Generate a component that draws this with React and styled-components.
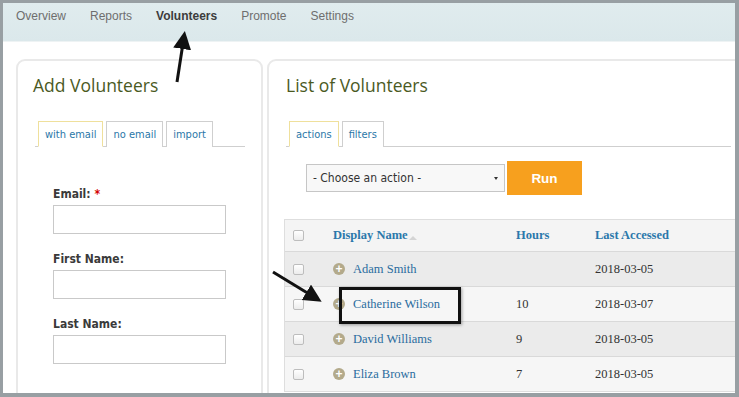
import styled, { createGlobalStyle } from "styled-components";

const Global = createGlobalStyle`
  html, body { margin: 0; padding: 0; background: #fff; }
`;

const Frame = styled.div`
  position: relative;
  width: 739px;
  height: 397px;
  box-sizing: border-box;
  border-style: solid;
  border-color: #989fa3;
  border-width: 3px 4px 4px 3px;
  overflow: hidden;
  background: #fff;
  font-family: "Liberation Sans", Arial, sans-serif;
`;

const Nav = styled.nav`
  height: 39px;
  box-sizing: border-box;
  padding: 6px 0 0 13px;
  display: flex;
  gap: 24px;
  background: linear-gradient(#e0ecee, #dbe8eb);
  border-bottom: 1px solid #eef3f4;
`;

const NavItem = styled.span`
  font-size: 12px;
  line-height: 14px;
  color: ${(p) => (p.$active ? "#3c3c3c" : "#6e6e6e")};
  font-weight: ${(p) => (p.$active ? "bold" : "normal")};
`;

const Content = styled.div`
  display: flex;
  gap: 4px;
  padding: 17px 0 0 13px;
`;

const Panel = styled.section`
  flex: none;
  width: ${(p) => p.$width}px;
  height: 360px;
  box-sizing: border-box;
  border: 2px solid #e9e9e9;
  border-radius: 9px;
  padding: ${(p) => p.$pad};
`;

const Title = styled.h2`
  margin: 0;
  font-family: "Open Sans", sans-serif;
  font-weight: 400;
  font-size: 17.5px;
  line-height: 24px;
  color: #4b5a1f;
`;

const TabBar = styled.div`
  display: flex;
  gap: 3px;
  margin: 24px ${(p) => p.$right}px 0 ${(p) => p.$left}px;
  padding-left: 3px;
  border-bottom: 1px solid #cfcfcf;
`;

const Tab = styled.span`
  box-sizing: border-box;
  height: 26px;
  padding: 0 6px;
  display: flex;
  align-items: center;
  font-family: "DejaVu Sans Condensed", "DejaVu Sans", sans-serif;
  font-size: 11px;
  color: #2a77a8;
  border: 1px solid ${(p) => (p.$active ? "#efe09c" : "#cfcfcf")};
  border-bottom: none;
  background: #fff;
  margin-bottom: -1px;
  ${(p) => p.$active && "border-bottom: 1px solid #fff;"}
`;

const Form = styled.div`
  padding: 40px 0 0 20px;
  display: flex;
  flex-direction: column;
`;

const Label = styled.label`
  font-family: "DejaVu Sans Condensed", "DejaVu Sans", sans-serif;
  font-weight: bold;
  font-size: 12px;
  line-height: 14px;
  color: #3a3a3a;
  margin-top: ${(p) => p.$top}px;
  margin-bottom: 4px;
`;

const Required = styled.span`
  color: #d40000;
`;

const Input = styled.input`
  box-sizing: border-box;
  width: 173px;
  height: 29px;
  border: 1px solid #c9c9c9;
  background: #fff;
`;

const ActionRow = styled.div`
  display: flex;
  align-items: center;
  gap: 2px;
  margin: 14px 0 0 20px;
`;

const Select = styled.div`
  box-sizing: border-box;
  width: 199px;
  height: 28px;
  border: 1px solid #c6c6c6;
  background: #f8f8f8;
  display: flex;
  align-items: center;
  justify-content: space-between;
  padding: 0 6px;
  font-family: "DejaVu Sans Condensed", "DejaVu Sans", sans-serif;
  font-size: 12px;
  color: #333;
`;

const Caret = styled.span`
  width: 0;
  height: 0;
  border-left: 2.5px solid transparent;
  border-right: 2.5px solid transparent;
  border-top: 3px solid #333;
`;

const RunButton = styled.button`
  width: 75px;
  height: 34px;
  border: none;
  background: #f7a01e;
  color: #fff;
  font-family: "Liberation Sans", Arial, sans-serif;
  font-weight: bold;
  font-size: 13.5px;
`;

const Table = styled.div`
  margin: 24px 0 0 -2px;
  border: 1px solid #dedede;
  font-family: "Liberation Serif", "Times New Roman", serif;
  font-size: 12.5px;
`;

const Row = styled.div`
  display: grid;
  grid-template-columns: 48px 183px 79px 1fr;
  align-items: center;
  height: ${(p) => (p.$head ? 31 : 34)}px;
  background: ${(p) => (p.$head ? "#f4f4f4" : p.$odd ? "#ebebeb" : "#f6f6f6")};
  border-top: ${(p) => (p.$head ? "none" : "1px solid #d9d9d9")};
  color: #333;
`;

const HeadCell = styled.span`
  font-weight: bold;
  color: #2b78ab;
  display: flex;
  align-items: center;
`;

const SortMark = styled.span`
  width: 0;
  height: 0;
  margin: 4px 0 0 1px;
  border-left: 4px solid transparent;
  border-right: 4px solid transparent;
  border-bottom: 4px solid #d4d4d4;
`;

const Check = styled.span`
  justify-self: start;
  margin-left: 8px;
  width: 9px;
  height: 9px;
  border: 1px solid #bdbdbd;
  border-radius: 2px;
  background: linear-gradient(#fff, #ececec);
`;

const NameCell = styled.span`
  display: flex;
  align-items: center;
  gap: 8px;
  color: #2a6c9e;
`;

const Plus = styled.span`
  width: 12px;
  height: 12px;
  border-radius: 50%;
  background: #b3aa8b;
  color: #fff;
  font-family: "Liberation Sans", Arial, sans-serif;
  font-weight: bold;
  font-size: 12px;
  line-height: 12px;
  text-align: center;
`;

const Highlight = styled.div`
  position: absolute;
  left: 336px;
  top: 284px;
  width: 122px;
  height: 37px;
  box-sizing: border-box;
  border: 3px solid #111;
  box-shadow: 1px 1px 3px rgba(0, 0, 0, 0.35);
`;

const Arrows = styled.svg`
  position: absolute;
  left: -3px;
  top: -3px;
  pointer-events: none;
`;

const volunteers = [
  { name: "Adam Smith", hours: "", date: "2018-03-05" },
  { name: "Catherine Wilson", hours: "10", date: "2018-03-07" },
  { name: "David Williams", hours: "9", date: "2018-03-05" },
  { name: "Eliza Brown", hours: "7", date: "2018-03-05" },
];

export default function App() {
  return (
    <Frame>
      <Global />
      <Nav>
        <NavItem>Overview</NavItem>
        <NavItem>Reports</NavItem>
        <NavItem $active>Volunteers</NavItem>
        <NavItem>Promote</NavItem>
        <NavItem>Settings</NavItem>
      </Nav>
      <Content>
        <Panel $width={247} $pad="12px 0 0 15px">
          <Title>Add Volunteers</Title>
          <TabBar $left={2} $right={16}>
            <Tab $active>with email</Tab>
            <Tab>no email</Tab>
            <Tab>import</Tab>
          </TabBar>
          <Form>
            <Label $top={0}>
              Email: <Required>*</Required>
            </Label>
            <Input />
            <Label $top={18}>First Name:</Label>
            <Input />
            <Label $top={18}>Last Name:</Label>
            <Input />
          </Form>
        </Panel>
        <Panel $width={490} $pad="12px 0 0 17px">
          <Title>List of Volunteers</Title>
          <TabBar $left={0} $right={24}>
            <Tab $active>actions</Tab>
            <Tab>filters</Tab>
          </TabBar>
          <ActionRow>
            <Select>
              - Choose an action -<Caret />
            </Select>
            <RunButton>Run</RunButton>
          </ActionRow>
          <Table>
            <Row $head>
              <Check />
              <HeadCell>
                Display Name<SortMark />
              </HeadCell>
              <HeadCell>Hours</HeadCell>
              <HeadCell>Last Accessed</HeadCell>
            </Row>
            {volunteers.map((v, i) => (
              <Row key={v.name} $odd={i % 2 === 0}>
                <Check />
                <NameCell>
                  <Plus>+</Plus>
                  {v.name}
                </NameCell>
                <span>{v.hours}</span>
                <span>{v.date}</span>
              </Row>
            ))}
          </Table>
        </Panel>
      </Content>
      <Highlight />
      <Arrows width="739" height="397" viewBox="0 0 739 397">
        <defs>
          <marker id="head" markerWidth="6" markerHeight="6" refX="3" refY="3" orient="auto">
            <path d="M0,0 L6,3 L0,6 Z" fill="#111" />
          </marker>
        </defs>
        <line x1="177" y1="82" x2="183.5" y2="40" stroke="#111" strokeWidth="3" markerEnd="url(#head)" />
        <line x1="273" y1="272" x2="314" y2="297" stroke="#111" strokeWidth="3" markerEnd="url(#head)" />
      </Arrows>
    </Frame>
  );
}
